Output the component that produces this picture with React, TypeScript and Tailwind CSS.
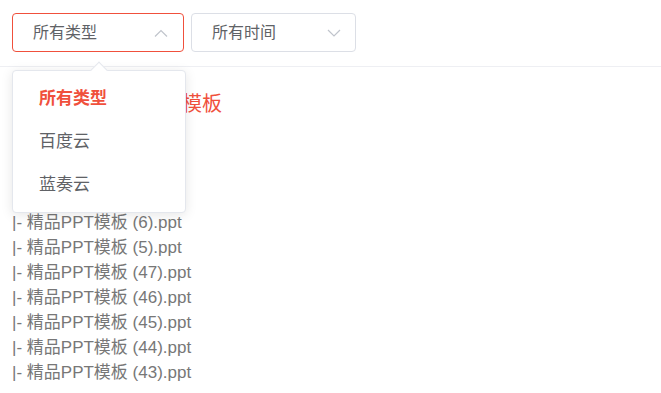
import { useState } from 'react';

const files = [
  '精品PPT模板 (9).ppt',
  '精品PPT模板 (8).ppt',
  '精品PPT模板 (7).ppt',
  '精品PPT模板 (6).ppt',
  '精品PPT模板 (5).ppt',
  '精品PPT模板 (47).ppt',
  '精品PPT模板 (46).ppt',
  '精品PPT模板 (45).ppt',
  '精品PPT模板 (44).ppt',
  '精品PPT模板 (43).ppt',
];

const typeOptions = ['所有类型', '百度云', '蓝奏云'];

const font = "font-['Liberation_Sans','Noto_Sans_CJK_SC',sans-serif]";

function Chevron({ up }: { up?: boolean }) {
  return (
    <svg width="14" height="8" viewBox="0 0 14 8" fill="none" className="text-[#c0c4cc]">
      <path
        d={up ? 'M1 7.5L7 1.5L13 7.5' : 'M1 1L7 7L13 1'}
        stroke="currentColor"
        strokeWidth="1.2"
      />
    </svg>
  );
}

export default function App() {
  const [type, setType] = useState('所有类型');
  return (
    <div className={`relative w-[661px] h-[393px] bg-white overflow-hidden ${font}`}>
      <div className="flex items-center gap-[7px] px-3 pt-[13px] pb-[14px] border-b border-[#eeeff3]">
        <div className="flex items-center justify-between w-[172px] h-[39px] pl-5 pr-[15px] border border-[#f0503c] rounded-[4px] text-[16px] text-[#606266]">
          <span>{type}</span>
          <Chevron up />
        </div>
        <div className="flex items-center justify-between w-[165px] h-[39px] pl-5 pr-[14px] border border-[#dcdfe6] rounded-[4px] text-[16px] text-[#606266]">
          <span>所有时间</span>
          <Chevron />
        </div>
      </div>

      <div className="px-3 pt-[22px]">
        <h2 className="pl-[11px] text-[20px] leading-[30px] text-[#f0503c]">全套免费精品PPT模板</h2>
        <ul className="mt-[16px] text-[17px] leading-[25px] text-[#777777]">
          {files.map((f) => (
            <li key={f}>|- {f}</li>
          ))}
        </ul>
      </div>

      <div className="absolute left-3 top-[70px] w-[174px] py-[6px] bg-white border border-[#e4e7ed] rounded-[4px] shadow-[0_2px_12px_rgba(0,0,0,0.1)]">
        <div className="absolute -top-[7px] left-[80px] w-3 h-3 rotate-45 bg-white border-l border-t border-[#e4e7ed]" />
        {typeOptions.map((o) => (
          <div
            key={o}
            onClick={() => setType(o)}
            className={`relative h-[43px] flex items-center pl-[26px] text-[17px] cursor-pointer ${
              o === type ? 'text-[#f0503c] font-bold' : 'text-[#606266]'
            }`}
          >
            {o}
          </div>
        ))}
      </div>
    </div>
  );
}
